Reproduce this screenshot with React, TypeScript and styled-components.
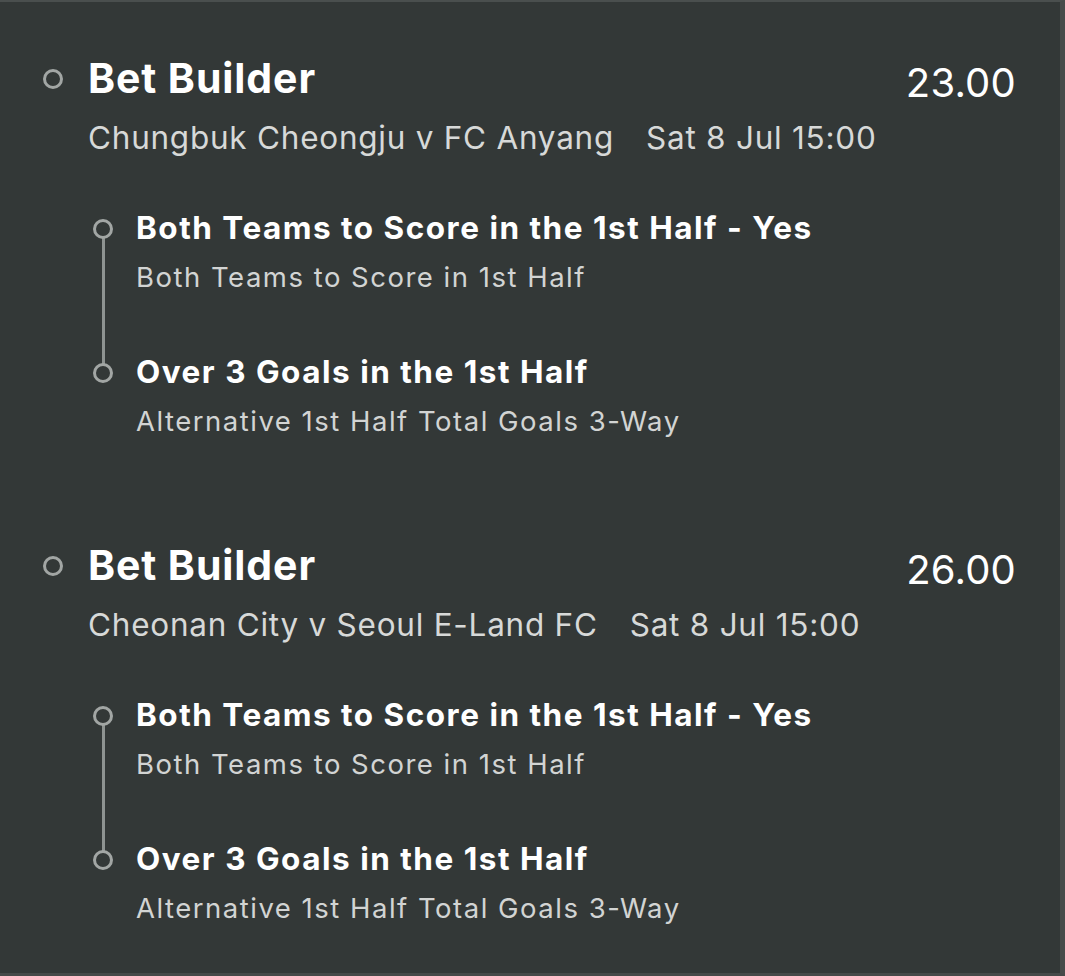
import React from 'react';
import { styled, createGlobalStyle } from 'styled-components';

const GlobalStyle = createGlobalStyle`
  html, body {
    margin: 0;
    padding: 0;
    background: #333837;
  }
  body {
    font-family: Inter, "Noto Sans", sans-serif;
    -webkit-font-smoothing: antialiased;
  }
`;

const Panel = styled.div`
  box-sizing: border-box;
  width: 1065px;
  height: 976px;
  background: #333837;
  border-top: 2px solid #4a4f4e;
  border-right: 5px solid #474b4a;
  border-bottom: 3px solid #454948;
  padding: 51px 44px 0 43px;
  overflow: hidden;
`;

const Bet = styled.section`
  & + & {
    margin-top: 101px;
  }
`;

const Header = styled.div`
  display: grid;
  grid-template-columns: 20px 1fr auto;
  column-gap: 25px;
  align-items: start;
`;

const Ring = styled.span`
  position: relative;
  z-index: 1;
  box-sizing: border-box;
  display: block;
  width: 20px;
  height: 20px;
  border: 3px solid #a2a6a4;
  border-radius: 50%;
  background: #333837;
`;

const HeaderRing = styled(Ring)`
  margin-top: 16px;
`;

const Title = styled.h2`
  margin: 0;
  font-size: 41px;
  line-height: 50px;
  font-weight: 700;
  color: #ffffff;
  letter-spacing: 0.9px;
`;

const Meta = styled.div`
  margin-top: 14px;
  display: flex;
  gap: 32px;
  font-size: 31.5px;
  line-height: 42px;
  color: #d7d9d8;
  letter-spacing: 0.75px;
`;

const Odds = styled.div`
  font-size: 40px;
  line-height: 50px;
  margin-top: 5px;
  color: #ffffff;
  letter-spacing: 0.2px;
`;

const Legs = styled.div`
  position: relative;
  margin: 49px 0 0 50px;
  &::before {
    content: '';
    position: absolute;
    left: 8.5px;
    width: 3px;
    top: 21px;
    bottom: 66px;
    background: #8e9391;
  }
`;

const Leg = styled.div`
  display: grid;
  grid-template-columns: 20px 1fr;
  column-gap: 23px;
  & + & {
    margin-top: 57px;
  }
`;

const LegRing = styled(Ring)`
  margin-top: 11px;
`;

const LegTitle = styled.div`
  font-size: 31.5px;
  line-height: 40px;
  font-weight: 700;
  color: #ffffff;
  letter-spacing: 1.5px;
`;

const LegMarket = styled.div`
  margin-top: 11px;
  font-size: 27.5px;
  line-height: 36px;
  color: #d2d4d3;
  letter-spacing: 1.5px;
`;

type BetData = {
  match: string;
  time: string;
  odds: string;
  legs: { selection: string; market: string }[];
};

const bets: BetData[] = [
  {
    match: 'Chungbuk Cheongju v FC Anyang',
    time: 'Sat 8 Jul 15:00',
    odds: '23.00',
    legs: [
      { selection: 'Both Teams to Score in the 1st Half - Yes', market: 'Both Teams to Score in 1st Half' },
      { selection: 'Over 3 Goals in the 1st Half', market: 'Alternative 1st Half Total Goals 3-Way' },
    ],
  },
  {
    match: 'Cheonan City v Seoul E-Land FC',
    time: 'Sat 8 Jul 15:00',
    odds: '26.00',
    legs: [
      { selection: 'Both Teams to Score in the 1st Half - Yes', market: 'Both Teams to Score in 1st Half' },
      { selection: 'Over 3 Goals in the 1st Half', market: 'Alternative 1st Half Total Goals 3-Way' },
    ],
  },
];

const App = () => (
  <>
    <GlobalStyle />
    <Panel>
      {bets.map((bet) => (
        <Bet key={bet.match}>
          <Header>
            <HeaderRing />
            <div>
              <Title>Bet Builder</Title>
              <Meta>
                <span>{bet.match}</span>
                <span>{bet.time}</span>
              </Meta>
            </div>
            <Odds>{bet.odds}</Odds>
          </Header>
          <Legs>
            {bet.legs.map((leg) => (
              <Leg key={leg.selection}>
                <LegRing />
                <div>
                  <LegTitle>{leg.selection}</LegTitle>
                  <LegMarket>{leg.market}</LegMarket>
                </div>
              </Leg>
            ))}
          </Legs>
        </Bet>
      ))}
    </Panel>
  </>
);

export default App;
